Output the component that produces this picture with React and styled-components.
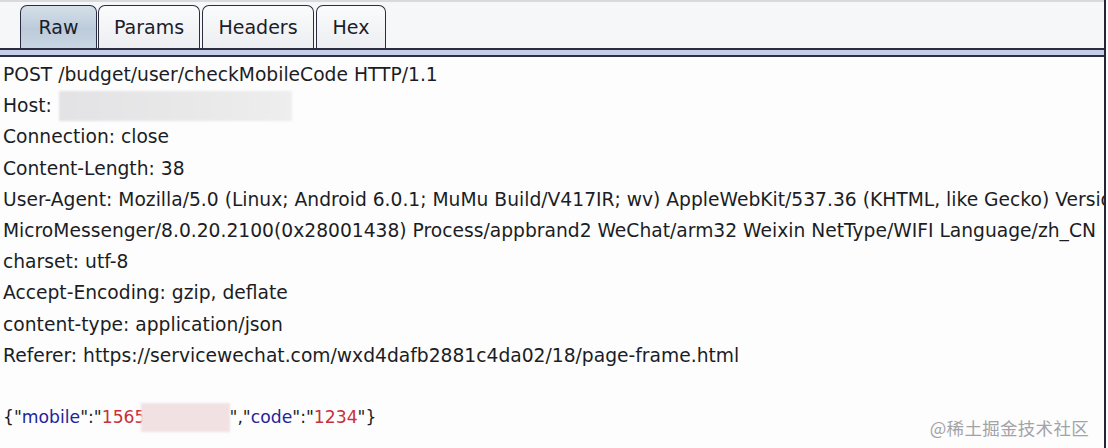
import React from "react";
import styled, { createGlobalStyle } from "styled-components";

const Global = createGlobalStyle`
  html, body { margin: 0; padding: 0; background: #ffffff; }
  body { font-family: "DejaVu Sans", "Liberation Sans", sans-serif; }
`;

const Frame = styled.div`
  position: relative;
  width: 1106px;
  height: 448px;
  box-sizing: border-box;
  border-right: 2px solid #23263a;
  background: #fdfdfe;
  display: flex;
  flex-direction: column;
  overflow: hidden;
`;

const TabStrip = styled.div`
  height: 48px;
  box-sizing: border-box;
  border-top: 2px solid #d9dadd;
  background: #f6f7f9;
  display: flex;
  align-items: flex-end;
  padding-left: 20px;
`;

const Tab = styled.div`
  height: 43px;
  box-sizing: border-box;
  width: ${(p) => p.$w}px;
  margin-right: ${(p) => p.$gap}px;
  border: 1.5px solid #2b2e40;
  border-bottom: none;
  border-radius: 7px 7px 0 0;
  background: ${(p) =>
    p.$active
      ? "linear-gradient(to bottom, #d5dfe9 0%, #bccbdb 55%, #c9d5e2 100%)"
      : "linear-gradient(to bottom, #fafbfc 0%, #eceef1 100%)"};
  display: flex;
  align-items: center;
  justify-content: center;
  font-size: 19px;
  color: #1b1d2a;
  padding-bottom: 1px;
`;

const Band = styled.div`
  height: 9px;
  box-sizing: border-box;
  border-top: 2px solid #2b2e40;
  border-bottom: 2px solid #2b2e40;
  background: #c6cde8;
`;

const Body = styled.div`
  padding: 2px 0 0 3px;
  font-size: 18.7px;
  line-height: 31.2px;
  color: #1c1d24;
  white-space: nowrap;
`;

const Line = styled.div`
  height: 31.2px;
  display: flex;
  align-items: center;
  font-size: ${(p) => (p.$small ? "17.2px" : "inherit")};
`;

const Redact = styled.span`
  display: inline-block;
  width: ${(p) => p.$w}px;
  height: ${(p) => p.$h}px;
  margin-left: ${(p) => p.$ml || 0}px;
  background: ${(p) => p.$bg};
  filter: blur(1px);
`;

const Key = styled.span`
  color: #23239a;
`;

const Val = styled.span`
  color: #c9303a;
`;

const Watermark = styled.div`
  position: absolute;
  right: 15px;
  bottom: 8px;
  font-family: "Noto Sans CJK SC", "Liberation Sans", sans-serif;
  font-size: 17.5px;
  color: #a3a3a6;
  letter-spacing: 0.3px;
`;

const tabs = [
  { label: "Raw", w: 77, gap: 1, active: true },
  { label: "Params", w: 102, gap: 2 },
  { label: "Headers", w: 112, gap: 2 },
  { label: "Hex", w: 70, gap: 0 },
];

export default function App() {
  return (
    <>
      <Global />
      <Frame>
        <TabStrip>
          {tabs.map((t) => (
            <Tab key={t.label} $w={t.w} $gap={t.gap} $active={t.active}>
              {t.label}
            </Tab>
          ))}
        </TabStrip>
        <Band />
        <Body>
          <Line>POST /budget/user/checkMobileCode HTTP/1.1</Line>
          <Line>
            Host:
            <Redact $w={233} $h={30} $ml={7} $bg="linear-gradient(to right, #e3e3e5, #e9e9ea 60%, #eeeeef)" />
          </Line>
          <Line>Connection: close</Line>
          <Line>Content-Length: 38</Line>
          <Line>
            User-Agent: Mozilla/5.0 (Linux; Android 6.0.1; MuMu Build/V417IR; wv) AppleWebKit/537.36 (KHTML, like Gecko) Version/4.0
          </Line>
          <Line>
            MicroMessenger/8.0.20.2100(0x28001438) Process/appbrand2 WeChat/arm32 Weixin NetType/WIFI Language/zh_CN
          </Line>
          <Line>charset: utf-8</Line>
          <Line>Accept-Encoding: gzip, deflate</Line>
          <Line>content-type: application/json</Line>
          <Line>Referer: https://servicewechat.com/wxd4dafb2881c4da02/18/page-frame.html</Line>
          <Line />
          <Line $small>
            {'{"'}
            <Key>mobile</Key>
            {'":"'}
            <Val>1565</Val>
            <Redact $w={89} $h={29} $ml={-5} $bg="#f1e1e2" />
            {'","'}
            <Key>code</Key>
            {'":"'}
            <Val>1234</Val>
            {'"}'}
          </Line>
        </Body>
        <Watermark>@稀土掘金技术社区</Watermark>
      </Frame>
    </>
  );
}
